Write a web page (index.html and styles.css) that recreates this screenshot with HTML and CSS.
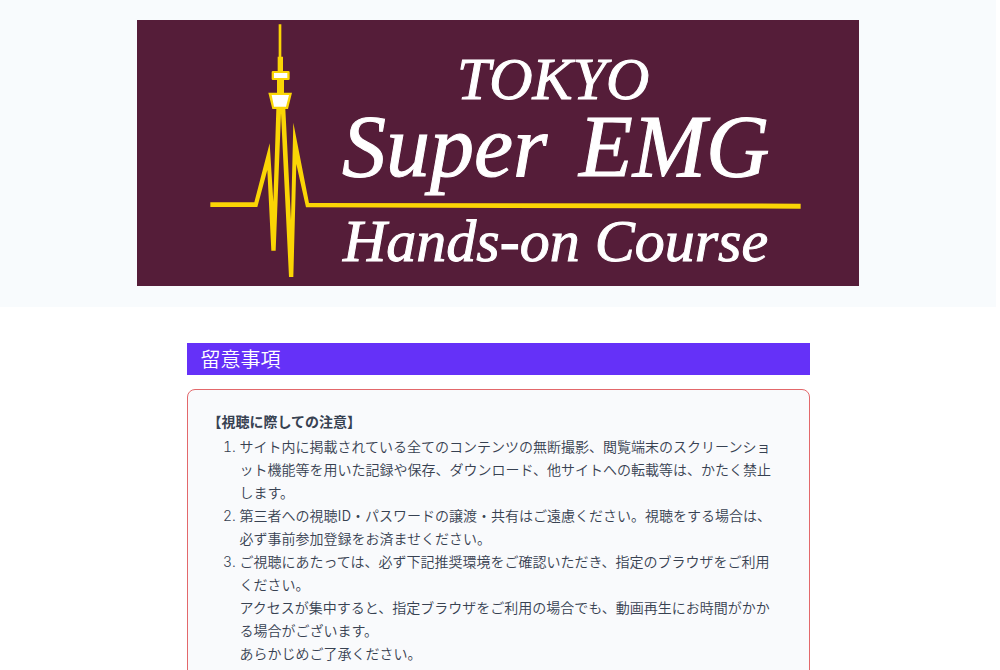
FILE: index.html
```html
<!DOCTYPE html>
<html lang="ja">
<head>
<meta charset="utf-8">
<title>TOKYO Super EMG Hands-on Course</title>
<link rel="stylesheet" href="styles.css">
</head>
<body>
<header class="site-header">
  <svg class="banner" viewBox="0 0 722 266" role="img" aria-label="TOKYO Super EMG Hands-on Course">
    <rect class="banner-bg" width="722" height="266"/>
    <g transform="translate(-7 -10) scale(.33333)">
      <path class="gold" d="M241 577H373L419 400L430 575L439 297H466L483 630L490 338L537 579L2012 581V596L528 592L499 462L490 801H477L453 310L437 722H424L412 480L382 591H241Z"/>
      <path class="gold" d="M446 43H454V140H459V183H475Q479 183 479 187V206Q479 210 475 210H462V248H486L474 297H427L415 248H441V210H429Q425 210 425 206V187Q425 183 429 183H443V140H446Z"/>
      <path class="white" d="M432 189H472V204H432ZM425 255H477L468 290H432Z"/>
    </g>
    <g class="banner-text">
      <text class="line-small" x="320" y="79">TOKYO</text>
      <text class="line-large" x="205" y="156">Super <tspan x="442">EMG</tspan></text>
      <text class="line-small" x="206" y="241">Hands-on Course</text>
    </g>
  </svg>
</header>
<main class="content">
  <h1 class="heading">留意事項</h1>
  <section class="notice">
    <h2 class="notice-title">【視聴に際しての注意】</h2>
    <ol class="notice-list">
      <li>サイト内に掲載されている全てのコンテンツの無断撮影、閲覧端末のスクリーンショット機能等を用いた記録や保存、ダウンロード、他サイトへの転載等は、かたく禁止します。</li>
      <li>第三者への視聴ID・パスワードの譲渡・共有はご遠慮ください。視聴をする場合は、必ず事前参加登録をお済ませください。</li>
      <li>ご視聴にあたっては、必ず下記推奨環境をご確認いただき、指定のブラウザをご利用ください。<br>アクセスが集中すると、指定ブラウザをご利用の場合でも、動画再生にお時間がかかる場合がございます。<br>あらかじめご了承ください。</li>
    </ol>
  </section>
</main>
</body>
</html>
```

FILE: styles.css
```css
* {
  box-sizing: border-box;
}

body {
  margin: 0;
  padding-right: 4px;
  background: #fff;
  color: #374151;
  font-family: "Noto Sans CJK JP", sans-serif;
  font-size: 14px;
  font-weight: 350;
  line-height: 23px;
}

.site-header {
  padding: 20px 20px 21px;
  background: #f8fbfd;
}

.banner {
  display: block;
  width: 100%;
  max-width: 722px;
  margin: 0 auto;
}

.banner-bg {
  fill: #551d39;
}

.gold {
  fill: #fad505;
}

.white,
.banner-text {
  fill: #fff;
}

.banner-text {
  font-family: "Liberation Serif", serif;
  font-style: italic;
  font-weight: 400;
  stroke: #fff;
  stroke-width: 1px;
}

.line-small {
  font-size: 60px;
}

.line-large {
  font-size: 88px;
}

.content {
  max-width: 623px;
  margin: 0 auto;
  padding: 36px 0;
}

.heading {
  margin: 0 0 14px;
  padding: 0 14px;
  background: #6531f8;
  color: #fff;
  font-size: 20px;
  font-weight: 350;
  line-height: 32px;
}

.notice {
  padding: 20px 34px 20px 20px;
  border: 1px solid #e3686b;
  border-radius: 8px;
  background: #f9fafc;
}

.notice-title {
  margin: 0 0 2px;
  font-size: 14px;
  font-weight: 700;
  line-height: 23px;
}

.notice-list {
  margin: 0;
  padding-left: 32px;
}

.notice-list li::marker {
  font-family: Inter, sans-serif;
}
```
